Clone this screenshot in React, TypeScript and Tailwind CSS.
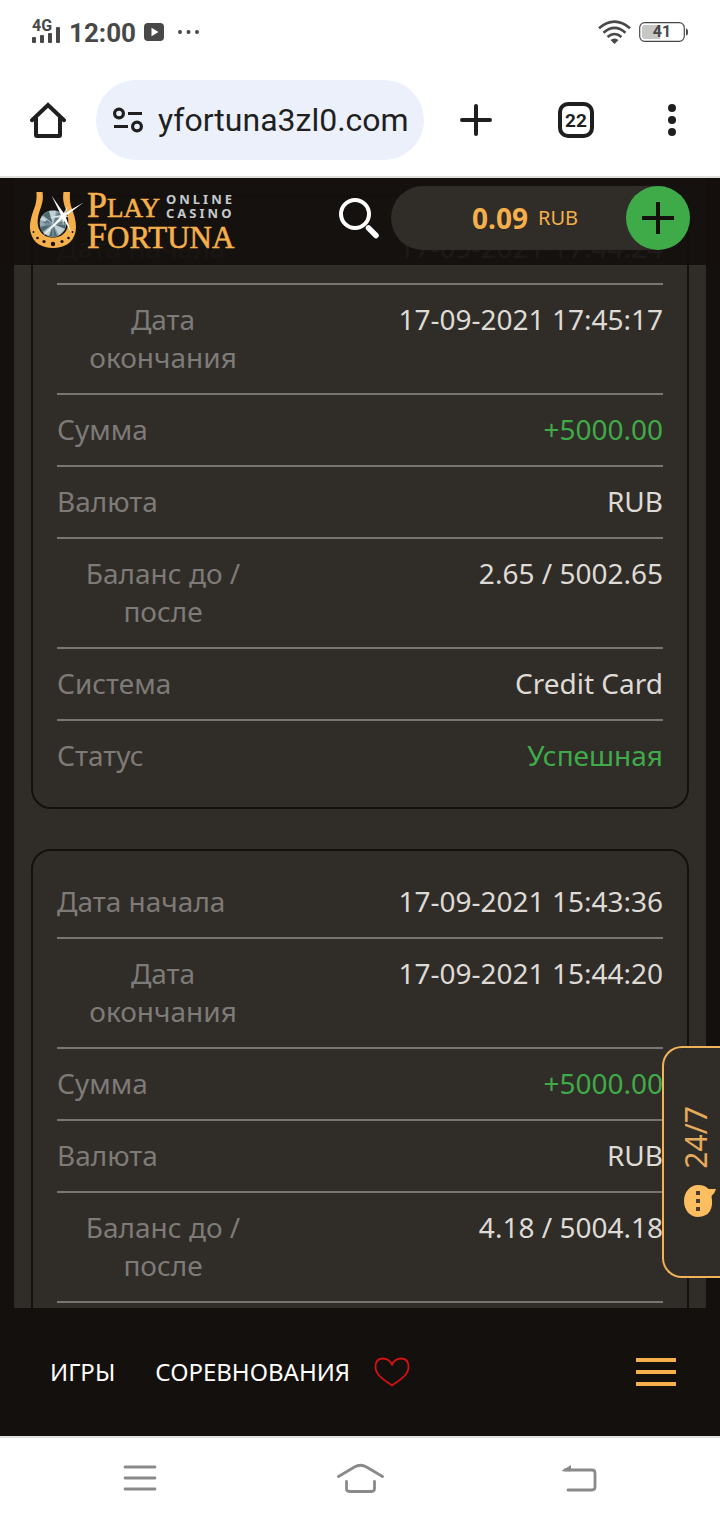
// App.tsx
type Row = {
  label: string;
  value: string;
  positive?: boolean;
};

const transactions: { id: number; rows: Row[] }[] = [
  {
    id: 1,
    rows: [
      { label: "Дата начала", value: "17-09-2021 17:44:24" },
      { label: "Дата окончания", value: "17-09-2021 17:45:17" },
      { label: "Сумма", value: "+5000.00", positive: true },
      { label: "Валюта", value: "RUB" },
      { label: "Баланс до / после", value: "2.65 / 5002.65" },
      { label: "Система", value: "Credit Card" },
      { label: "Статус", value: "Успешная", positive: true },
    ],
  },
  {
    id: 2,
    rows: [
      { label: "Дата начала", value: "17-09-2021 15:43:36" },
      { label: "Дата окончания", value: "17-09-2021 15:44:20" },
      { label: "Сумма", value: "+5000.00", positive: true },
      { label: "Валюта", value: "RUB" },
      { label: "Баланс до / после", value: "4.18 / 5004.18" },
      { label: "Система", value: "Credit Card" },
      { label: "Статус", value: "Успешная", positive: true },
    ],
  },
];

function StatusBar() {
  return (
    <div className="flex h-16 shrink-0 items-center justify-between px-8 text-[#484848]">
      <div className="flex items-center">
        <svg width="29" height="28" viewBox="0 0 29 28" fill="currentColor" aria-label="4G">
          <text x="0" y="13" fontSize="16" fontWeight="700" fontFamily="Roboto, sans-serif">4G</text>
          <rect x="0" y="19" width="4" height="6" rx="1" />
          <rect x="8" y="17" width="4" height="8" rx="1" />
          <rect x="16" y="15" width="4" height="10" rx="1" />
          <rect x="24" y="9" width="4" height="16" rx="1" />
        </svg>
        <span className="ml-2 pt-0.5 text-[26px] leading-8 font-bold">12:00</span>
        <svg className="ml-2" width="20" height="18" viewBox="0 0 20 18">
          <rect width="20" height="18" rx="4" fill="currentColor" />
          <path d="M7.500 4.800v8.400l7-4.200z" fill="#fff" />
        </svg>
        <svg className="ml-3.5" width="22" height="4" viewBox="0 0 22 4" fill="currentColor">
          <circle cx="2" cy="2" r="2" />
          <circle cx="10.500" cy="2" r="2" />
          <circle cx="19" cy="2" r="2" />
        </svg>
      </div>
      <div className="flex items-center gap-2">
        <svg width="33" height="24" viewBox="0 0 33 24" fill="none" stroke="currentColor" strokeWidth="2.600">
          <path d="M1 8.200Q16.500-5 32 8.200" />
          <path d="M5.500 12.700Q16.500 3.200 27.500 12.700" />
          <path d="M9.500 17Q16.500 11 23.500 17" />
          <path d="M12.500 20Q16.500 17 20.500 20L16.500 24z" fill="currentColor" stroke="none" />
        </svg>
        <svg width="49" height="20" viewBox="0 0 49 20">
          <rect x="0.700" y="0.700" width="44.600" height="18.600" rx="5" fill="none" stroke="currentColor" strokeWidth="1.200" />
          <path d="M6 3H21V17H6a3 3 0 0 1-3-3V6a3 3 0 0 1 3-3z" fill="#c6c6c4" />
          <path d="M47 6.500q2 0 2 3.500t-2 3.500z" fill="currentColor" />
          <text x="23" y="15" textAnchor="middle" fontSize="16" fontWeight="700" fontFamily="Roboto, sans-serif" fill="currentColor">41</text>
        </svg>
      </div>
    </div>
  );
}

function BrowserBar() {
  return (
    <div className="flex h-[114px] shrink-0 items-center border-b-2 border-[#dfdfdd] text-[#1f1f1f]">
      <button type="button" aria-label="Home" className="flex h-20 w-24 items-center justify-center">
        <svg width="36" height="36" viewBox="0 0 36 36" fill="none" stroke="currentColor" strokeWidth="4" strokeLinejoin="round" strokeLinecap="round">
          <path d="M6 16V33a1 1 0 0 0 1 1H29a1 1 0 0 0 1-1V16" />
          <path d="M2 18.200L18 3L34 18.200" strokeLinejoin="miter" />
        </svg>
      </button>
      <label className="mr-1 flex h-20 min-w-0 flex-1 items-center rounded-full bg-[#ebf0fa] pr-3 pl-4">
        <svg className="shrink-0" width="32" height="26" viewBox="0 0 32 26" fill="none" stroke="currentColor" strokeWidth="3.200">
          <circle cx="7" cy="6.500" r="4.400" />
          <path d="M16 6.500H30M2 19.500H16" />
          <circle cx="25" cy="19.500" r="4.400" />
        </svg>
        <input
          aria-label="Address"
          defaultValue="yfortuna3zl0.com"
          className="ml-3.5 h-12 w-full min-w-0 bg-transparent text-[32px] leading-10 outline-none"
        />
      </label>
      <button type="button" aria-label="New tab" className="mr-1 flex h-20 w-24 items-center justify-center">
        <svg width="32" height="32" viewBox="0 0 32 32" stroke="currentColor" strokeWidth="4" strokeLinecap="round">
          <path d="M16 2V30M2 16H30" />
        </svg>
      </button>
      <button type="button" aria-label="Tabs" className="flex h-20 w-24 items-center justify-center">
        <span className="flex size-9 items-center justify-center rounded-[10px] border-4 border-current">
          <svg width="28" height="28" viewBox="0 0 28 28" fill="currentColor">
            <text x="14" y="21" textAnchor="middle" fontSize="19" fontWeight="700" fontFamily="Roboto, sans-serif">22</text>
          </svg>
        </span>
      </button>
      <button type="button" aria-label="Menu" className="flex h-20 w-24 items-center justify-center">
        <svg width="8" height="32" viewBox="0 0 8 32" fill="currentColor">
          <circle cx="4" cy="4" r="4" />
          <circle cx="4" cy="16" r="4" />
          <circle cx="4" cy="28" r="4" />
        </svg>
      </button>
    </div>
  );
}

function Logo() {
  return (
    <svg width="208" height="60" viewBox="0 0 208 60">
      {/* horseshoe */}
      <path
        d="M7.500 2H13.500C14.500 9 13.500 13 11 20C8.500 27 7.500 34 10.500 40C13 45 18 47.500 24 47.500C30 47.500 35 45 37.500 40C40.500 34 39.500 27 37 20C34.500 13 33.500 9 34.500 2H41C40.500 9 41 14 43 19C46 27 48 35 46.500 42C44 53 35 58 24 58C13 58 4 53 1.500 42C0 35 2 27 5 19C7 14 8 9 7.500 2z"
        fill="#f5b04c"
      />
      <g fill="#17120f">
        <circle cx="4.500" cy="42" r="1" />
        <circle cx="8.500" cy="48" r="1.300" />
        <circle cx="15" cy="51.500" r="1.600" />
        <circle cx="24" cy="54" r="2.200" />
        <circle cx="33" cy="51.500" r="1.600" />
        <circle cx="39.500" cy="48" r="1.300" />
        <circle cx="43.500" cy="42" r="1" />
      </g>
      {/* diamond */}
      <circle cx="24" cy="33.500" r="13.300" fill="#8ba3ac" />
      <path d="M24 34L14 25L20 21zM24 34L37 31L36 39zM24 34L28 46L20 46zM24 34L11 37L13 42z" fill="#4f6870" />
      <path d="M24 34L20 21L27 21zM24 34L36 39L30 45zM24 34L20 46L14 43zM24 34L11 30L13 26z" fill="#c3d1d6" />
      <path d="M24 34L29 22L34 25zM14 33L18 30L24 34L18 37z" fill="#617c86" />
      <path d="M15 27L34 41M24 21V46M11 34H37" stroke="#b5c6cc" strokeWidth="0.600" />
      {/* sparkle */}
      <path d="M54.500 12.500L35.500 27L13.500 46.500L33.500 24.500z" fill="#fff" />
      <path d="M22.500 5.500L36 25L42.500 43L33 27z" fill="#fff" />
      <path d="M39 16L36.500 25L40 27L35.500 27.500L34 36L33 27.500L20 27.500L32 25L31 20L34.500 23z" fill="#fff" opacity=".8" />
      <g fill="#f5b04c" stroke="#f5b04c" strokeWidth="0.600" fontFamily="'Liberation Serif', serif">
        <text x="58" y="27" fontSize="36">P<tspan fontSize="27">LAY</tspan></text>
        <text x="58" y="58" fontSize="36">F<tspan fontSize="31">ORTUNA</tspan></text>
      </g>
      <g fill="#c5cacd" fontSize="13" fontWeight="700" fontFamily="'Noto Sans', sans-serif" letterSpacing="3">
        <text x="137" y="14">ONLINE</text>
        <text x="137" y="28">CASINO</text>
      </g>
    </svg>
  );
}

function SiteHeader() {
  return (
    <header className="absolute inset-x-0 top-0 z-10 flex h-[87px] items-start bg-[#14100e]/95 pt-2 pr-[30px] pl-[29px]">
      <a href="#" aria-label="Play Fortuna" className="mt-1">
        <Logo />
      </a>
      <button type="button" aria-label="Поиск" className="mt-3 mr-[11px] ml-auto">
        <svg width="42" height="42" viewBox="0 0 42 42" fill="none" stroke="#fff">
          <circle cx="17" cy="16" r="14" strokeWidth="4" />
          <path d="M30.500 30L38 37.500" strokeWidth="5.500" strokeLinecap="round" />
        </svg>
      </button>
      <div className="flex h-16 w-[299px] items-center rounded-full bg-[#302c28] text-[#f5b04c]">
        <div className="flex flex-1 items-center justify-end gap-2.5 pr-12">
          <span className="text-[28px] leading-8 font-bold">0.09</span>
          <span className="text-[20px] leading-8">RUB</span>
        </div>
        <button type="button" aria-label="Пополнить" className="flex size-16 items-center justify-center rounded-full bg-[#3fab48]">
          <svg width="32" height="32" viewBox="0 0 32 32" stroke="#14100d" strokeWidth="4">
            <path d="M16 0V32M0 16H32" />
          </svg>
        </button>
      </div>
    </header>
  );
}

function TransactionCard({ rows }: { rows: Row[] }) {
  return (
    <dl className="rounded-[20px] border-2 border-[#14100d] px-6 py-4">
      {rows.map((row) => (
        <div
          key={row.label}
          className="flex items-start justify-between border-b-2 border-[#777471] pt-[15px] pb-[17px] text-[28px] leading-[38px] last:border-b-0"
        >
          <dt className="max-w-[35%] text-center text-[#7d7b78]">{row.label}</dt>
          <dd className={row.positive ? "text-[#3fab48]" : "text-[#dedad6]"}>{row.value}</dd>
        </div>
      ))}
    </dl>
  );
}

function SupportTab() {
  return (
    <button
      type="button"
      className="absolute right-0 bottom-[30px] z-10 flex h-[232px] w-[58px] flex-col items-start justify-center gap-4 rounded-l-[20px] border-2 border-r-0 border-[#f0b35a] bg-[#302c28] pl-4 text-[#e5ab5b]"
    >
      <span className="rotate-180 text-[30px] leading-8 [writing-mode:vertical-rl]">24/7</span>
      <svg width="36" height="34" viewBox="-4 0 36 34">
        <path d="M14 1C19 1 22 2.500 24.500 5H32Q31 9 27.500 12Q31 32 14 33C6 33 0 26 0 17S6 1 14 1z" fill="#fdbd61" />
        <path d="M12 7h4v4h-4zM12 15h4v4h-4zM12 23h4v4h-4z" fill="#4a3d2c" />
      </svg>
    </button>
  );
}

function SiteFooter() {
  return (
    <nav className="flex h-32 shrink-0 items-center bg-[#14100d] pr-11 pl-[50px] text-2xl text-white">
      <a href="#">ИГРЫ</a>
      <a href="#" className="ml-10">СОРЕВНОВАНИЯ</a>
      <a href="#" aria-label="Избранное" className="ml-6">
        <svg width="36" height="30" viewBox="0 0 36 30" fill="none" stroke="#d01212" strokeWidth="1.800" strokeLinejoin="round">
          <path d="M18 8C17 4 13 1.500 9 1.500C4 1.500 1.500 5 1.500 10C1.500 18 10 23 18 28.500C26 23 34.500 18 34.500 10C34.500 5 32 1.500 27 1.500C23 1.500 19 4 18 8z" />
        </svg>
      </a>
      <button type="button" aria-label="Меню" className="ml-auto flex w-10 flex-col gap-2">
        <span className="h-1 bg-[#f5b04c]" />
        <span className="h-1 bg-[#f5b04c]" />
        <span className="h-1 bg-[#f5b04c]" />
      </button>
    </nav>
  );
}

function SystemNav() {
  return (
    <div className="flex h-[84px] shrink-0 items-center justify-between border-t-2 border-[#e3e1e0] bg-white px-[120px] pb-0.5 text-[#8a8a8a]">
      <button type="button" aria-label="Recent apps" className="flex w-10 justify-center">
        <svg width="34" height="26" viewBox="0 0 34 26" stroke="currentColor" strokeWidth="2.800" strokeLinecap="round">
          <path d="M2 2H32M2 13H32M2 24H32" />
        </svg>
      </button>
      <button type="button" aria-label="Home screen" className="flex justify-center">
        <svg width="48" height="30" viewBox="0 0 48 30" fill="none" stroke="currentColor" strokeWidth="2.800" strokeLinecap="round">
          <path d="M2.500 13.500L18.500 4Q24.500 .500 30.500 4L46.500 13.500" />
          <path d="M10.500 18.500V25.500Q10.500 28.500 13.500 28.500H35.500Q38.500 28.500 38.500 25.500V18.500" />
        </svg>
      </button>
      <button type="button" aria-label="Back" className="flex w-10 justify-start">
        <svg width="38" height="28" viewBox="-1 0 38 28" fill="none" stroke="currentColor" strokeWidth="2.800" strokeLinecap="round">
          <path d="M4 6H31Q34 6 34 9V23Q34 26 31 26H7" />
          <path d="M1 6.500L10 1V7.200H1z" fill="currentColor" stroke="none" />
        </svg>
      </button>
    </div>
  );
}

export default function App() {
  return (
    <div className="flex h-screen flex-col overflow-hidden bg-white font-[Roboto,sans-serif]">
      <StatusBar />
      <BrowserBar />
      <div className="relative flex min-h-0 flex-1 flex-col bg-[#14100d] font-['Noto_Sans',sans-serif]">
        <SiteHeader />
        <main className="relative min-h-0 flex-1 overflow-hidden px-3.5">
          <div className="flex flex-col gap-10 bg-[#302c28] p-[17px]">
            {transactions.map((item) => (
              <TransactionCard key={item.id} rows={item.rows} />
            ))}
          </div>
          <SupportTab />
        </main>
        <SiteFooter />
      </div>
      <SystemNav />
    </div>
  );
}
